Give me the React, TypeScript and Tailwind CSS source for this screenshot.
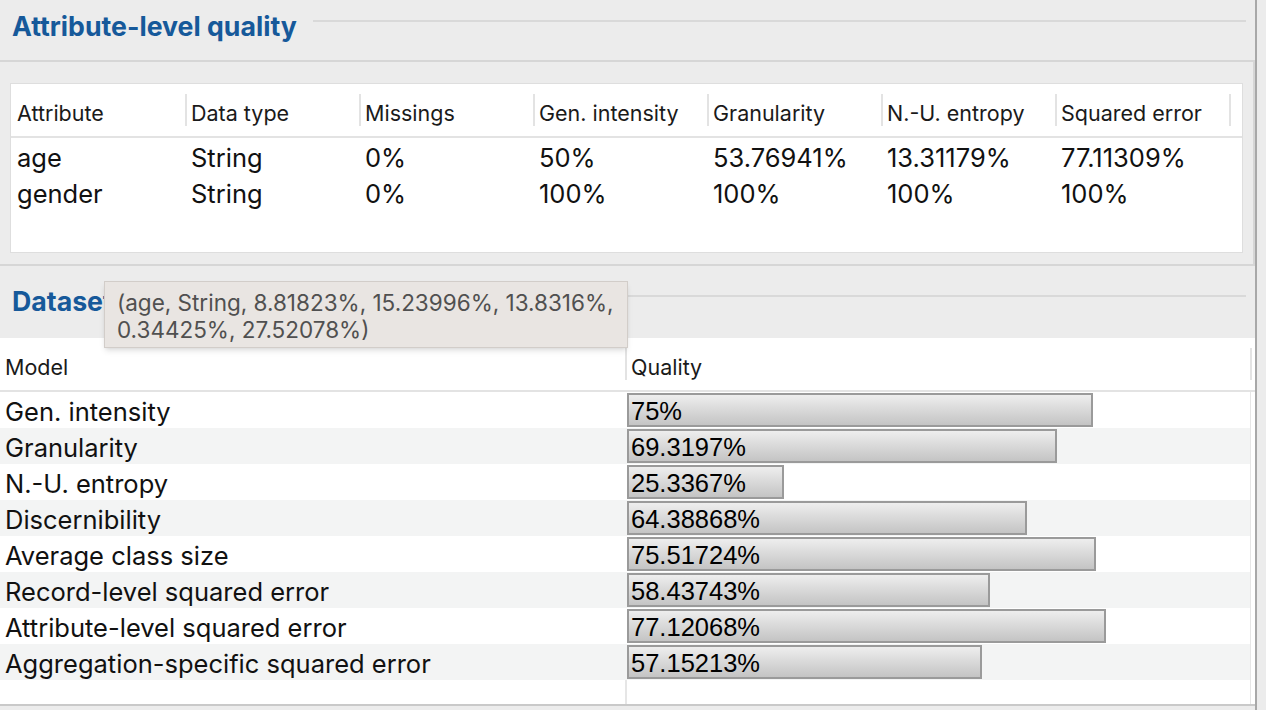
import React from 'react';

interface ModelQuality {
  name: string;
  value: number;
  label: string;
}

const attributeColumns = [
  'Attribute',
  'Data type',
  'Missings',
  'Gen. intensity',
  'Granularity',
  'N.-U. entropy',
  'Squared error',
];

const attributeRows = [
  ['age', 'String', '0%', '50%', '53.76941%', '13.31179%', '77.11309%'],
  ['gender', 'String', '0%', '100%', '100%', '100%', '100%'],
];

const models: ModelQuality[] = [
  { name: 'Gen. intensity', value: 75, label: '75%' },
  { name: 'Granularity', value: 69.3197, label: '69.3197%' },
  { name: 'N.-U. entropy', value: 25.3367, label: '25.3367%' },
  { name: 'Discernibility', value: 64.38868, label: '64.38868%' },
  { name: 'Average class size', value: 75.51724, label: '75.51724%' },
  { name: 'Record-level squared error', value: 58.43743, label: '58.43743%' },
  { name: 'Attribute-level squared error', value: 77.12068, label: '77.12068%' },
  { name: 'Aggregation-specific squared error', value: 57.15213, label: '57.15213%' },
];

const SectionTitle: React.FC<{ title: string; className: string }> = ({ title, className }) => (
  <div className={`flex items-start gap-4 pl-3 pr-[9px] ${className}`}>
    <h2 className="whitespace-nowrap text-[26.7px] font-bold leading-[30px] text-[#16599a]">{title}</h2>
    <div className="mt-[9px] h-[2px] flex-1 bg-[#d9d9d9]" />
  </div>
);

const HeaderSep = () => <span className="h-[32px] w-[2px] shrink-0 bg-[#e3e3e3]" />;

const AttributeTable = () => (
  <div className="flex h-[170px] flex-col border border-[#dedede] bg-white">
    {/* Header */}
    <div className="flex h-[54px] shrink-0 items-center border-b-2 border-[#e3e3e3] text-[21.5px] text-[#1a1a1a]">
      {attributeColumns.map((col, i) => (
        <div key={col} className="flex w-[174px] items-center">
          {i > 0 && <HeaderSep />}
          <span className={`pt-[6px] ${i > 0 ? 'pl-[4px]' : 'pl-[6px]'}`}>{col}</span>
        </div>
      ))}
      <HeaderSep />
    </div>

    {/* Rows */}
    {attributeRows.map((row) => (
      <div key={row[0]} className="flex h-[36px] items-center text-[25.5px]">
        {row.map((cell, i) => (
          <div key={i} className="w-[174px] pl-[6px] pt-[5px]">
            {cell}
          </div>
        ))}
      </div>
    ))}
  </div>
);

const DatasetTable = () => (
  <div className="flex h-[368px] flex-col border-b-2 border-[#c9c9c9] bg-white">
    {/* Header */}
    <div className="flex h-[54px] shrink-0 items-center border-b-2 border-[#e3e3e3] text-[21.5px] text-[#1a1a1a]">
      <div className="w-[625px] pl-[5px] pt-[6px]">Model</div>
      <HeaderSep />
      <div className="w-[623px] pl-[4px] pt-[6px]">Quality</div>
      <HeaderSep />
    </div>

    <div className="flex flex-1">
      <div className="flex w-[1250px] flex-col">
        {models.map((m, i) => (
          <div
            key={m.name}
            className={`flex h-[36px] items-center ${i % 2 === 1 ? 'bg-[#f3f4f4]' : 'bg-white'}`}
          >
            <div className="w-[627px] pl-[5px] pt-[5px] text-[25.5px]">{m.name}</div>
            <div className="w-[621px]">
              <div
                className="flex h-[34px] items-center border-2 border-[#9a9a9a] bg-linear-to-b from-[#eeeeee] to-[#c4c4c4] pl-[2px] pt-[3px] font-['Liberation_Sans',sans-serif] text-[25.5px] text-black"
                style={{ width: `${m.value}%` }}
              >
                {m.label}
              </div>
            </div>
          </div>
        ))}
        <div className="flex-1">
          <div className="h-full w-[627px] border-r-2 border-[#e6e6e6]" />
        </div>
      </div>
      <div className="w-[1px] bg-[#e6e6e6]" />
    </div>
  </div>
);

const Tooltip = () => (
  <div className="absolute left-[104px] top-[281px] h-[67px] w-[524px] border border-[#d2cdc9] bg-[#e9e5e2] pl-[12px] pt-[7px] text-[22.5px] leading-[27px] text-[#505050] shadow-md">
    <div>(age, String, 8.81823%, 15.23996%, 13.8316%,</div>
    <div>0.34425%, 27.52078%)</div>
  </div>
);

export default function App() {
  return (
    <div className="relative flex h-[710px] w-[1266px] overflow-hidden bg-[#ececec] font-['Inter','Noto_Sans',sans-serif] text-[#111]">
      <div className="flex w-[1257px] shrink-0 flex-col border-r-2 border-[#a8a8a8]">
        <SectionTitle title="Attribute-level quality" className="h-[60px] pt-[11px]" />
        <div className="h-[206px] border-y-2 border-r-2 border-[#d6d6d6] px-[10px] pt-[21px]">
          <AttributeTable />
        </div>
        <SectionTitle title="Dataset-level quality" className="h-[72px] pt-[20px]" />
        <DatasetTable />
      </div>
      <Tooltip />
    </div>
  );
}
